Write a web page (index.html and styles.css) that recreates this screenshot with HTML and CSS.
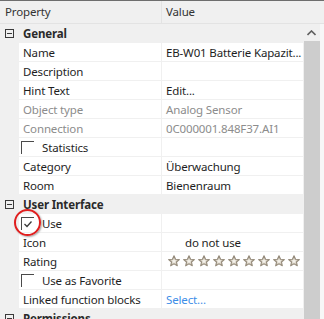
FILE: index.html
```html
<!DOCTYPE html>
<html>
<head>
  <title>Properties</title>
  <link rel="stylesheet" href="styles.css">
</head>
<body>
  <div class="grid">
    <div class="head">
      <div class="hcell name">Property</div>
      <div class="hcell value">Value</div>
      <div class="hfill"></div>
    </div>

    <div class="body">
      <div class="rows">
        <div class="cat"><span class="toggle"></span>General</div>
        <div class="row"><div class="name">Name</div><div class="value">EB-W01 Batterie Kapazit...</div></div>
        <div class="row"><div class="name">Description</div><div class="value"></div></div>
        <div class="row"><div class="name">Hint Text</div><div class="value">Edit...</div></div>
        <div class="row muted"><div class="name">Object type</div><div class="value">Analog Sensor</div></div>
        <div class="row muted"><div class="name">Connection</div><div class="value">0C000001.848F37.AI1</div></div>
        <div class="row"><div class="name"><span class="check"></span>Statistics</div><div class="value"></div></div>
        <div class="row"><div class="name">Category</div><div class="value">Überwachung</div></div>
        <div class="row"><div class="name">Room</div><div class="value">Bienenraum</div></div>

        <div class="cat"><span class="toggle"></span>User Interface</div>
        <div class="row"><div class="name"><span class="check"><svg width="12" height="12" viewBox="0 0 12 12"><path d="M2.5 6 L5 8.5 L9.5 3.5" fill="none" stroke="#3a3a3a" stroke-width="1.3"/></svg></span>Use</div><div class="value"></div></div>
        <div class="row"><div class="name">Icon</div><div class="value indent">do not use</div></div>
        <div class="row"><div class="name">Rating</div><div class="value stars" id="stars"></div></div>
        <div class="row"><div class="name"><span class="check"></span>Use as Favorite</div><div class="value"></div></div>
        <div class="row"><div class="name">Linked function blocks</div><div class="value link">Select...</div></div>

        <div class="cat"><span class="toggle"></span>Permissions</div>

        <div class="mark"></div>
      </div>

      <div class="scroll">
        <div class="arrow">
          <svg width="9" height="6" viewBox="0 0 9 6"><path d="M0.5 5 L4.5 1 L8.5 5" fill="none" stroke="#606060" stroke-width="1.6"/></svg>
        </div>
        <div class="thumb"></div>
      </div>
      <div class="edge"></div>
    </div>
  </div>

  <script>
    let stars = document.getElementById("stars");
    for (let i = 0; i < 9; i++) {
      stars.innerHTML += '<svg width="12" height="12" viewBox="0 0 13 13"><path d="M6.5 0.8 L8.2 4.6 L12.3 4.9 L9.2 7.6 L10.1 11.7 L6.5 9.6 L2.9 11.7 L3.8 7.6 L0.7 4.9 L4.8 4.6 Z" fill="#d2cbbd" stroke="#958b7b" stroke-width="1.2" stroke-linejoin="round"/><path d="M6.5 4 L7.3 5.8 L9.2 6 L7.8 7.2 L8.2 9 L6.5 8 L4.8 9 L5.2 7.2 L3.8 6 L5.7 5.8 Z" fill="#f4f1ea"/></svg>';
    }
  </script>
</body>
</html>
```

FILE: styles.css
```css
body {
  margin: 0;
  background: #fff;
  font-family: 'Noto Sans', 'Open Sans', sans-serif;
  font-size: 11.5px;
  letter-spacing: -0.15px;
  color: #1e1e1e;
}
.grid {
  width: 324px;
  height: 319px;
  overflow: hidden;
  border-top: 1px solid #6e6e6e;
  box-sizing: border-box;
}
.head {
  display: flex;
  height: 22px;
  background: #f0f0f0;
  border-bottom: 1px solid #e3e3e3;
  color: #333;
}
.hcell {
  line-height: 22px;
}
.head .name {
  width: 156px;
  padding-left: 5px;
  border-right: 1px solid #e3e3e3;
}
.head .value {
  width: 137px;
  padding-left: 4px;
}
.body {
  display: flex;
  height: 296px;
}
.rows {
  position: relative;
  width: 303px;
  background: #f0f0f0;
}
.cat {
  display: flex;
  align-items: center;
  height: 19px;
  font-weight: bold;
  color: #2a2a2a;
}
.toggle {
  position: relative;
  width: 7px;
  height: 7px;
  margin: 0 9px 0 5px;
  border: 1px solid #3a3a3a;
}
.toggle::after {
  content: "";
  position: absolute;
  left: 1px;
  top: 3px;
  width: 5px;
  height: 1px;
  background: #3a3a3a;
}
.row {
  display: flex;
  height: 18px;
  margin-left: 19px;
  border-bottom: 1px solid #f0f0f0;
}
.row .name,
.row .value {
  display: flex;
  align-items: center;
  background: #fff;
  white-space: nowrap;
  overflow: hidden;
}
.row .name {
  width: 138px;
  padding-left: 4px;
  border-right: 1px solid #f0f0f0;
}
.row .value {
  flex: 1;
  padding-left: 4px;
}
.muted {
  color: #8c8c8c;
}
.value.indent {
  padding-left: 23px;
}
.value.link {
  color: #3d8ee8;
}
.value.stars {
  padding-left: 6px;
  gap: 3px;
}
.value.stars svg {
  flex: none;
}
.check {
  flex: none;
  display: flex;
  width: 13px;
  height: 13px;
  margin: 0 8px 0 -2px;
  box-sizing: border-box;
  border-left: 1px solid #4a4a4a;
  border-top: 1px solid #4a4a4a;
}
.mark {
  position: absolute;
  left: 14px;
  top: 185px;
  width: 23px;
  height: 23px;
  border: 2px solid #e01e1e;
  border-radius: 50%;
  box-shadow: 1px 1px 2px rgba(0, 0, 0, 0.35);
}
.scroll {
  display: flex;
  flex-direction: column;
  width: 17px;
  background: #f0f0f0;
}
.arrow {
  display: flex;
  align-items: center;
  justify-content: center;
  height: 17px;
}
.thumb {
  flex: 1;
  margin: 0 0 0 1px;
  background: #cdcdcd;
}
.edge {
  width: 4px;
  background: #f7f7f7;
}
```
